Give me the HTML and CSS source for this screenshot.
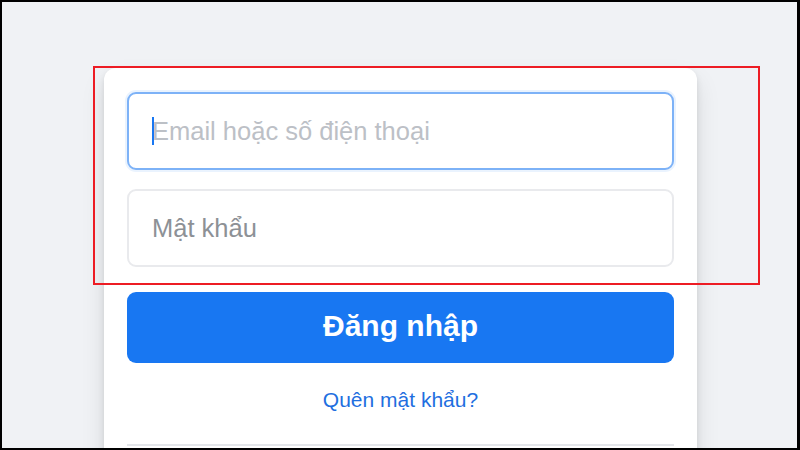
FILE: index.html
```html
<!DOCTYPE html>
<html lang="vi">
<head>
    <meta charset="UTF-8">
    <meta name="viewport" content="width=device-width, initial-scale=1.0">
    <title>Đăng nhập</title>
    <link rel="stylesheet" href="styles.css">
</head>
<body>
    <div class="frame">
        <div class="login-card">
            <form class="login-form">
                <div class="field">
                    <input type="text" class="field-input is-focus" placeholder="Email hoặc số điện thoại">
                    <span class="caret"></span>
                </div>
                <div class="field">
                    <input type="password" class="field-input" placeholder="Mật khẩu">
                </div>
                <button type="button" class="login-btn">Đăng nhập</button>
            </form>
            <a href="#" class="forgot-link">Quên mật khẩu?</a>
            <div class="divider"></div>
        </div>

        <div class="highlight-box"></div>
    </div>
</body>
</html>
```

FILE: styles.css
```css
* {
    margin: 0;
    padding: 0;
    box-sizing: border-box;
    font-family: 'Liberation Sans', Arial, Helvetica, sans-serif;
}

body {
    background-color: #fff;
}

.frame {
    position: relative;
    width: 800px;
    height: 450px;
    border: 2px solid #000;
    border-right-width: 3px;
    background-color: #f0f2f5;
    overflow: hidden;
    padding: 66px 0 0 102px;
}

.login-card {
    width: 593px;
    min-height: 420px;
    background-color: #fff;
    border-radius: 12px;
    padding: 24px 23px 0 23px;
    box-shadow: 0 3px 6px rgba(0, 0, 0, 0.1), 0 12px 24px rgba(0, 0, 0, 0.1);
}

.login-form {
    display: flex;
    flex-direction: column;
}

.field {
    position: relative;
}

.field + .field {
    margin-top: 19px;
}

.field-input {
    display: block;
    width: 100%;
    height: 78px;
    border: 2px solid #e9eaed;
    border-radius: 9px;
    padding: 0 23px;
    font-size: 25.5px;
    color: #1c1e21;
    background: #fff;
    outline: none;
}

.field-input::placeholder {
    color: #8d9196;
}

.field-input.is-focus {
    border-color: #7db2f7;
    box-shadow: 0 0 0 2px #eaf3fe;
}

.field-input.is-focus::placeholder {
    color: #bcc0c6;
}

.caret {
    position: absolute;
    left: 25px;
    top: 25px;
    width: 2px;
    height: 28px;
    background-color: #1877f2;
}

.login-btn {
    margin-top: 25px;
    height: 71px;
    border: none;
    border-radius: 9px;
    background-color: #1877f2;
    color: #fff;
    font-size: 30px;
    font-weight: bold;
    padding-bottom: 4px;
    cursor: pointer;
}

.forgot-link {
    display: block;
    margin-top: 25px;
    text-align: center;
    font-size: 21px;
    color: #1f6fe0;
    text-decoration: none;
}

.divider {
    margin-top: 32px;
    height: 2px;
    background-color: #e4e6ea;
}

.highlight-box {
    position: absolute;
    left: 91px;
    top: 64px;
    width: 667px;
    height: 219px;
    border: 2px solid #ed1c24;
}
```
